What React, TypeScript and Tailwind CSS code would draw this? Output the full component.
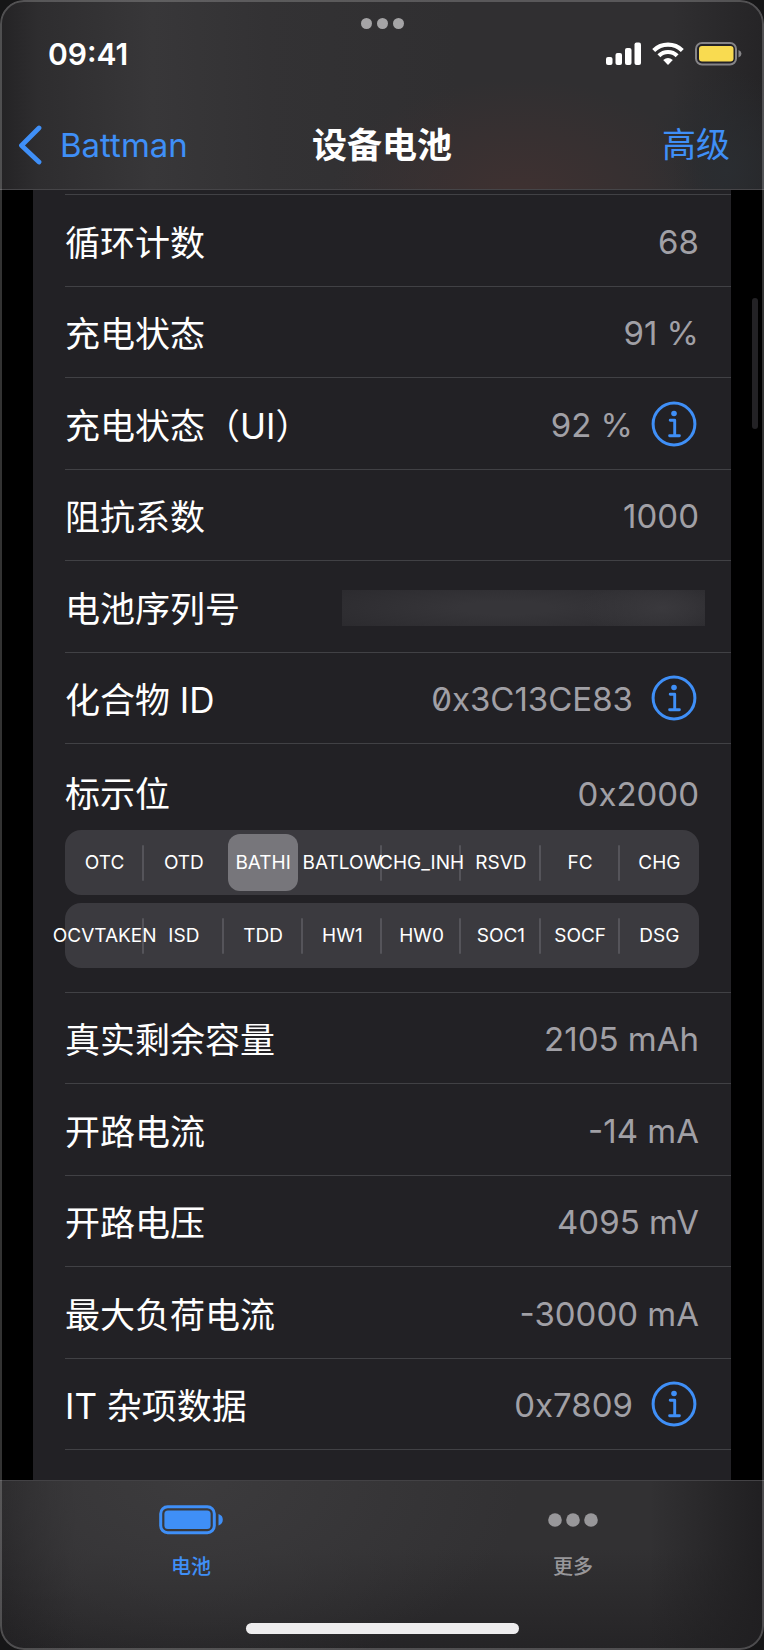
import { useState } from 'react';

type Row = { label: string; value: string; info?: boolean; slashed?: boolean; redacted?: boolean };

const topRows: Row[] = [
  { label: '循环计数', value: '68' },
  { label: '充电状态', value: '91 %' },
  { label: '充电状态（UI）', value: '92 %', info: true },
  { label: '阻抗系数', value: '1000' },
  { label: '电池序列号', value: '', redacted: true },
  { label: '化合物 ID', value: '0x3C13CE83', info: true, slashed: true },
];

const bottomRows: Row[] = [
  { label: '真实剩余容量', value: '2105 mAh' },
  { label: '开路电流', value: '-14 mA' },
  { label: '开路电压', value: '4095 mV' },
  { label: '最大负荷电流', value: '-30000 mA' },
  { label: 'IT 杂项数据', value: '0x7809', info: true },
];

const flagRows = [
  ['OTC', 'OTD', 'BATHI', 'BATLOW', 'CHG_INH', 'RSVD', 'FC', 'CHG'],
  ['OCVTAKEN', 'ISD', 'TDD', 'HW1', 'HW0', 'SOC1', 'SOCF', 'DSG'],
];

function InfoIcon() {
  return (
    <svg viewBox="0 0 46 46" className="size-[46px]" fill="none" stroke="#3f8ff7">
      <circle cx="23" cy="23" r="20.9" strokeWidth="3" />
      <circle cx="23" cy="12.5" r="2.8" fill="#3f8ff7" stroke="none" />
      <path d="M19.2 19.3h4.5V34.5M18.6 34.7h9.8" strokeWidth="2.9" strokeLinecap="round" strokeLinejoin="round" />
    </svg>
  );
}

function DataRow({ row }: { row: Row }) {
  return (
    <li className="flex items-center border-b border-[#414145] pr-8 odd:h-[92px] even:h-[91px]">
      <span className="grow pt-1 text-white">{row.label}</span>
      {row.redacted ? (
        <span
          role="img"
          aria-label="已隐藏"
          className="mt-0.5 -mr-1.5 h-9 w-[363px] bg-[#2a292d] bg-[radial-gradient(ellipse_80px_34px_at_88%_50%,#3a393d_0%,transparent_100%),radial-gradient(ellipse_230px_34px_at_45%_50%,#363539_20%,transparent_100%)]"
        />
      ) : (
        <span
          className={
            row.slashed
              ? "pt-0.5 text-[33px] text-[#a1a0a6] [font-feature-settings:'zero']"
              : 'pt-0.5 text-[33px] text-[#a1a0a6]'
          }
        >
          {row.value}
        </span>
      )}
      {row.info && (
        <button type="button" aria-label={`${row.label} 说明`} className="mr-0.5 ml-[18px]">
          <InfoIcon />
        </button>
      )}
    </li>
  );
}

function FlagBar({ flags, active, onPick }: { flags: string[]; active: string; onPick: (f: string) => void }) {
  const at = flags.indexOf(active);
  return (
    <div className="flex h-[65px] items-center rounded-2xl bg-[#3b3a3f]">
      {flags.map((f, i) => {
        const divider = i > 0 && !(at >= 0 && (i === at || i === at + 1));
        return (
          <div key={f} className="relative flex h-full w-0 flex-1 items-center justify-center">
            {divider && <span className="absolute -left-0.5 h-9 w-0.5 rounded-full bg-[#55545a]" />}
            <button
              type="button"
              aria-pressed={f === active}
              onClick={() => onPick(f)}
              className={
                f === active
                  ? 'flex h-[57px] w-[70px] items-center justify-center rounded-xl bg-[#77767b] whitespace-nowrap'
                  : 'relative z-10 flex items-center justify-center whitespace-nowrap'
              }
            >
              {f}
            </button>
          </div>
        );
      })}
    </div>
  );
}

export default function App() {
  const [active, setActive] = useState('BATHI');
  return (
    <div className="min-h-screen bg-[#161617]">
      <div className="relative flex min-h-screen flex-col overflow-hidden rounded-[24px] bg-black font-['Inter','Noto_Sans_CJK_SC',sans-serif] text-[35px] leading-[44px] text-white">
        <header className="border-b border-[#464548] bg-[#302f31] bg-[radial-gradient(ellipse_190px_120px_at_68%_105%,#3e3131_10%,transparent_100%),radial-gradient(ellipse_80px_100px_at_95%_90%,#2a2d31_0%,transparent_100%),linear-gradient(90deg,#242325_0%,#2e2d2f_5%,#383739_20%,#333234_35%,#302f31_60%,#302f31_88%,#252426_100%)]">
          <div className="flex h-[100px] flex-col px-6">
            <button type="button" aria-label="多任务" className="mt-[18px] flex justify-center gap-[5px]">
              <i className="size-[11px] rounded-full bg-[#a5a4a6]" />
              <i className="size-[11px] rounded-full bg-[#a5a4a6]" />
              <i className="size-[11px] rounded-full bg-[#a5a4a6]" />
            </button>
            <div className="-mr-0.5 mt-[7px] flex items-center justify-between pl-6">
              <span className="text-[30px] leading-9 font-semibold">09:41</span>
              <div className="flex items-center gap-[11px]">
                <svg viewBox="0 0 35 24" className="h-6 w-[35px]" fill="#fff">
                  <rect x="0" y="15" width="6.5" height="8" rx="2" />
                  <rect x="9.5" y="11" width="6.5" height="12" rx="2" />
                  <rect x="19" y="6" width="6.5" height="17" rx="2" />
                  <rect x="28.5" y="0.5" width="6.5" height="22.5" rx="2" />
                </svg>
                <svg viewBox="0 0 32 24" className="h-6 w-8" fill="none" stroke="#fff" strokeWidth="4.2">
                  <path d="M1.7 8.4a20.5 20.5 0 0 1 28.6 0" />
                  <path d="M6.9 13.7a13 13 0 0 1 18.2 0" />
                  <path d="M11.2 18.1q4.8-4 9.6 0L16 23z" fill="#fff" stroke="none" />
                </svg>
                <svg viewBox="0 0 47 24" className="h-6 w-[47px]">
                  <rect x="1" y="1" width="40" height="21.5" rx="6" fill="#222127" stroke="#858487" strokeWidth="2" />
                  <rect x="4" y="4" width="34.5" height="15.5" rx="3" fill="#f9db50" />
                  <path d="M43.5 8q3 1.3 3 3.8t-3 3.8z" fill="#858487" />
                </svg>
              </div>
            </div>
          </div>
          <nav className="grid h-[89px] grid-cols-[1fr_auto_1fr] items-center px-[18px] text-[#3f8ff7]">
            <a href="#battman" className="flex items-center gap-[18px] text-[33px]">
              <svg viewBox="0 0 24 40" className="h-10 w-6" fill="none" stroke="currentColor" strokeWidth="4.8" strokeLinecap="round" strokeLinejoin="round">
                <path d="M21 3L3.5 20.5 21 37" />
              </svg>
              Battman
            </a>
            <h1 className="font-semibold text-white">设备电池</h1>
            <a href="#advanced" className="mr-4 justify-self-end text-[34px]">高级</a>
          </nav>
        </header>

        <main className="relative mx-[33px] grow bg-[#222125] pt-1 pl-8">
          <ul className="border-t border-[#414145]">
            {topRows.map((r) => (
              <DataRow key={r.label} row={r} />
            ))}
            <li className="border-b border-[#414145] pt-7 pr-8 pb-6">
              <div className="mb-[14px] flex justify-between">
                <span>标示位</span>
                <span className="text-[33px] text-[#a1a0a6]">0x2000</span>
              </div>
              <div className="flex flex-col gap-2 text-[19px] leading-6">
                {flagRows.map((flags) => (
                  <FlagBar key={flags[0]} flags={flags} active={active} onPick={setActive} />
                ))}
              </div>
            </li>
            {bottomRows.map((r) => (
              <DataRow key={r.label} row={r} />
            ))}
          </ul>
          <div className="absolute top-[108px] -right-[27px] h-[131px] w-[6px] rounded-full bg-[#232225]" />
        </main>

        <footer className="h-[170px] border-t border-[#434245] bg-[#2e2d2f] bg-[radial-gradient(ellipse_330px_200px_at_25%_0%,#3c3b3d_0%,transparent_100%),linear-gradient(90deg,#222123_0%,transparent_10%,transparent_85%,#201f21_100%),linear-gradient(180deg,#323133_40%,#252426_100%)]">
          <nav className="grid h-[142px] grid-cols-2 text-[20px] leading-6 font-medium">
            <a href="#battery" className="flex flex-col items-center pt-6 text-[#3f8ff7]">
              <svg viewBox="0 0 64 30" className="h-[30px] w-16">
                <rect x="1.7" y="1.7" width="53.6" height="26" rx="7" fill="none" stroke="currentColor" strokeWidth="3" />
                <rect x="5.4" y="5.4" width="46.2" height="18.6" rx="3.5" fill="currentColor" />
                <path d="M59.5 9q4.3 1.4 4.3 5.7t-4.3 5.7z" fill="currentColor" />
              </svg>
              <span className="mt-5">电池</span>
            </a>
            <a href="#more" className="flex flex-col items-center pt-6 text-[#98979a]">
              <svg viewBox="0 0 64 30" className="h-[30px] w-16" fill="currentColor">
                <circle cx="14" cy="15" r="6.8" />
                <circle cx="32" cy="15" r="6.8" />
                <circle cx="50" cy="15" r="6.8" />
              </svg>
              <span className="mt-5">更多</span>
            </a>
          </nav>
          <div className="mx-auto h-[11px] w-[273px] rounded-full bg-[#eeedee]" />
        </footer>
        <div className="pointer-events-none absolute inset-0 z-20 rounded-[24px] border-2 border-white/20" />
      </div>
    </div>
  );
}
